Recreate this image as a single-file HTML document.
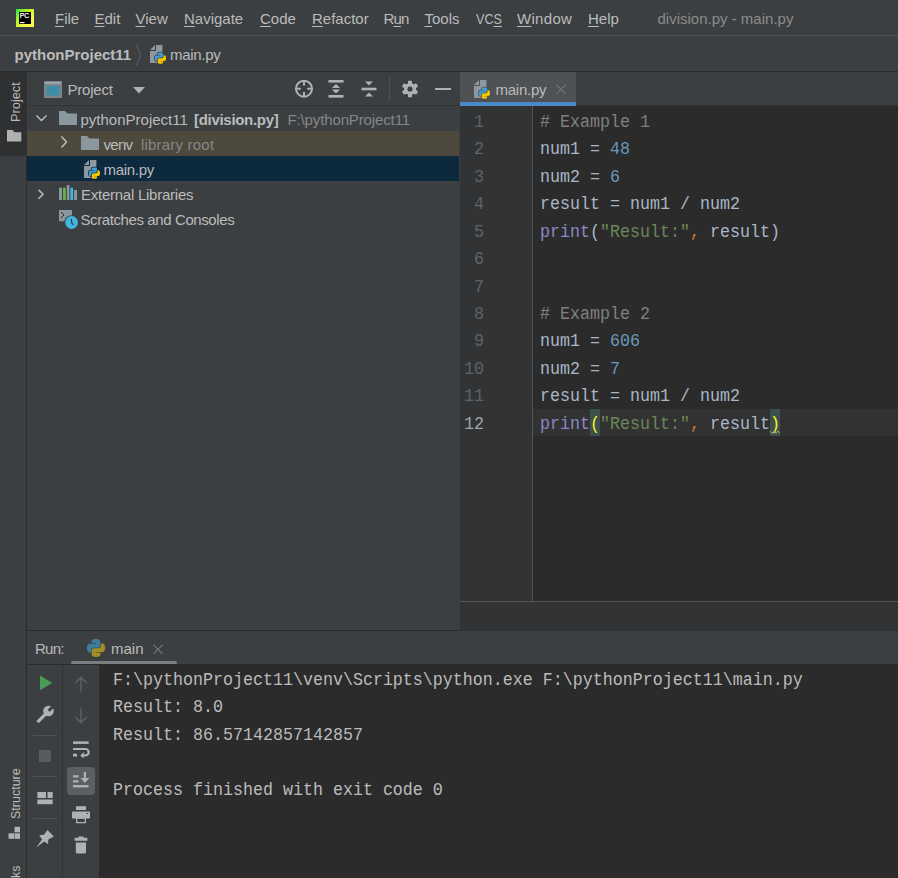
<!DOCTYPE html>
<html><head><meta charset="utf-8">
<style>
*{box-sizing:border-box}
html,body{margin:0;padding:0;width:898px;height:878px;overflow:hidden;background:#3C3F41;font-family:"Liberation Sans",sans-serif;color:#BBBBBB}
.a{position:absolute}
.t{position:absolute;white-space:pre;font-size:15px;line-height:18px}
.m{position:absolute;white-space:pre;font-family:"Liberation Mono",monospace;font-size:16.67px;line-height:27.46px;transform:scaleY(1.07);transform-origin:0 19.5px}
u{text-decoration:underline;text-decoration-thickness:1px;text-underline-offset:2px}
</style></head><body>
<!-- menu bar -->
<div class="a" style="left:0;top:0;width:898px;height:35px;background:#3C3F41"></div>
<div class="a" style="left:0;top:35px;width:898px;height:1px;background:#515151"></div>
<!-- nav bar -->
<div class="a" style="left:0;top:36px;width:898px;height:35px;background:#3C3F41"></div>
<div class="a" style="left:0;top:71px;width:898px;height:1px;background:#2B2B2B"></div>

<!-- left strip -->
<div class="a" style="left:0;top:72px;width:27px;height:806px;background:#3C3F41"></div>
<div class="a" style="left:26px;top:72px;width:1px;height:806px;background:#2B2B2B"></div>
<div class="a" style="left:0;top:72px;width:27px;height:84px;background:#2E3032"></div>

<!-- project panel -->
<div class="a" style="left:27px;top:72px;width:432px;height:558px;background:#3C3F41"></div>
<div class="a" style="left:27px;top:105px;width:432px;height:1px;background:#323232"></div>
<div class="a" style="left:27px;top:131px;width:432px;height:25px;background:#4D493D"></div>
<div class="a" style="left:27px;top:156px;width:432px;height:25px;background:#0D293E"></div>


<!-- editor -->
<div class="a" style="left:460px;top:72px;width:438px;height:30px;background:#3C3F41"></div>
<div class="a" style="left:460px;top:72px;width:116px;height:30px;background:#4E5254"></div>
<div class="a" style="left:460px;top:102px;width:116px;height:4px;background:#4A88C7"></div>
<div class="a" style="left:576px;top:105px;width:322px;height:1px;background:#323232"></div>
<div class="a" style="left:460px;top:106px;width:72px;height:495px;background:#313335"></div>
<div class="a" style="left:532px;top:106px;width:1px;height:495px;background:#555555"></div>
<div class="a" style="left:533px;top:106px;width:365px;height:495px;background:#2B2B2B"></div>
<div class="a" style="left:533px;top:409px;width:365px;height:27px;background:#323232"></div>
<div class="a" style="left:460px;top:601px;width:438px;height:1px;background:#555555"></div>
<div class="a" style="left:460px;top:602px;width:438px;height:28px;background:#313335"></div>

<!-- run panel -->
<div class="a" style="left:27px;top:630px;width:433px;height:1px;background:#2B2B2B"></div>
<div class="a" style="left:460px;top:630px;width:438px;height:1px;background:#2F3133"></div>
<div class="a" style="left:27px;top:631px;width:871px;height:34px;background:#3C3F41"></div>
<div class="a" style="left:27px;top:664px;width:72px;height:1px;background:#2B2B2B"></div>
<div class="a" style="left:71px;top:661px;width:106px;height:3px;border-radius:2px;background:#7B7E81"></div>
<div class="a" style="left:27px;top:665px;width:35px;height:213px;background:#3C3F41"></div>
<div class="a" style="left:62px;top:665px;width:1px;height:213px;background:#323232"></div>
<div class="a" style="left:63px;top:665px;width:36px;height:213px;background:#3C3F41"></div>
<div class="a" style="left:99px;top:664px;width:799px;height:214px;background:#2B2B2B"></div>


<!-- menu text -->
<div class="t" style="left:55px;top:10px"><u>F</u>ile</div>
<div class="t" style="left:94.5px;top:10px"><u>E</u>dit</div>
<div class="t" style="left:135.5px;top:10px"><u>V</u>iew</div>
<div class="t" style="left:184px;top:10px"><u>N</u>avigate</div>
<div class="t" style="left:260px;top:10px"><u>C</u>ode</div>
<div class="t" style="left:312px;top:10px"><u>R</u>efactor</div>
<div class="t" style="left:383.5px;top:10px;letter-spacing:-0.9px">R<u>u</u>n</div>
<div class="t" style="left:424.5px;top:10px"><u>T</u>ools</div>
<div class="t" style="left:476px;top:10px;transform:scaleX(0.84);transform-origin:0 0">VC<u>S</u></div>
<div class="t" style="left:517px;top:10px;letter-spacing:0.3px"><u>W</u>indow</div>
<div class="t" style="left:588px;top:10px"><u>H</u>elp</div>
<div class="t" style="left:657.5px;top:10px;color:#8C8C8C">division.py - main.py</div>
<!-- nav text -->
<div class="t" style="left:14.5px;top:46px;font-weight:bold">pythonProject11</div>
<div class="t" style="left:170px;top:46px;letter-spacing:-0.3px">main.py</div>
<!-- project header -->
<div class="t" style="left:67.5px;top:81px;letter-spacing:-0.2px">Project</div>
<!-- tree -->
<div class="t" style="left:80.5px;top:111px">pythonProject11</div>
<div class="t" style="left:194px;top:111px;font-weight:bold;letter-spacing:-0.3px">[division.py]</div>
<div class="t" style="left:287.5px;top:111px;color:#868686;letter-spacing:-0.13px">F:\pythonProject11</div>
<div class="t" style="left:103.5px;top:136px;letter-spacing:-0.7px">venv</div>
<div class="t" style="left:141px;top:136px;color:#868686;letter-spacing:0.2px">library root</div>
<div class="t" style="left:103.5px;top:161px;letter-spacing:-0.3px">main.py</div>
<div class="t" style="left:81px;top:186px;letter-spacing:-0.25px">External Libraries</div>
<div class="t" style="left:80.5px;top:211px;letter-spacing:-0.4px">Scratches and Consoles</div>


<!-- PC logo -->
<svg class="a" style="left:16px;top:9px" width="18" height="18" viewBox="0 0 18 18">
<defs><linearGradient id="pcg" x1="0" y1="0" x2="1" y2="1"><stop offset="0" stop-color="#1FE05A"/><stop offset="0.3" stop-color="#A8F020"/><stop offset="0.7" stop-color="#FCF84A"/><stop offset="1" stop-color="#FCF84A"/></linearGradient></defs>
<rect x="0" y="0" width="18" height="18" fill="url(#pcg)"/>
<rect x="3" y="3" width="12" height="12" fill="#000"/>
<text x="3.7" y="9.1" font-family="Liberation Sans" font-size="7.6" fill="#fff" stroke="#fff" stroke-width="0.25" textLength="9.3" lengthAdjust="spacingAndGlyphs">PC</text>
<rect x="4" y="13" width="4.5" height="1.2" fill="#fff"/>
</svg>
<!-- nav chevron -->
<svg class="a" style="left:134px;top:43px" width="10" height="24" viewBox="0 0 10 24"><path d="M2,1 L7,12 L2,23" fill="none" stroke="#5E6163" stroke-width="1"/></svg>
<svg class="a" style="left:149px;top:44px" width="19" height="20" viewBox="0 0 19 20">
<path d="M1,6 L6,1 L6,6 Z" fill="#8E989E"/>
<path d="M7,1 H13.4 V19 H1 V7 H7 Z" fill="#8E989E"/>
<g transform="translate(5.7,8.5) scale(0.103)" stroke="#3C3F41" stroke-width="14" paint-order="stroke">
<path d="M54.9,0C26.8,0 28.6,12.2 28.6,12.2L28.6,24.8H55.4V28.6H18C18,28.6 0,26.5 0,55C0,83.5 15.7,82.5 15.7,82.5H25.1V69.3C25.1,69.3 24.6,53.6 40.5,53.6H67C67,53.6 81.9,53.8 81.9,39.2V15C81.9,15 84.2,0 54.9,0Z" fill="#3E9FD6"/><path d="M55.7,110C83.8,110 82,97.8 82,97.8L82,85.2H55.2V81.4H92.6C92.6,81.4 110.6,83.5 110.6,55C110.6,26.5 94.9,27.5 94.9,27.5H85.5V40.7C85.5,40.7 86,56.4 70.1,56.4H43.6C43.6,56.4 28.7,56.2 28.7,70.8V95C28.7,95 26.4,110 55.7,110Z" fill="#F4C300"/>
</g></svg>
<!-- project header icon -->
<svg class="a" style="left:44px;top:81px" width="18" height="17" viewBox="0 0 18 17">
<rect x="0" y="0" width="18" height="17" fill="#7C8589"/>
<rect x="1" y="1" width="16" height="2" fill="#9BA4A8"/>
<rect x="2.5" y="5" width="13" height="9.5" fill="#3E8CA8"/>
</svg>
<svg class="a" style="left:133px;top:87px" width="12" height="7" viewBox="0 0 12 7"><path d="M0,0 H12 L6,6.5 Z" fill="#AFB1B3"/></svg>
<!-- header toolbar icons -->
<svg class="a" style="left:294px;top:79px" width="20" height="20" viewBox="0 0 20 20" fill="none" stroke="#AFB1B3" stroke-width="2">
<circle cx="10" cy="9.7" r="8"/>
<path d="M10,1.5 V6.5 M10,13 V18 M1.8,9.7 H6.8 M13.2,9.7 H18.2"/>
</svg>
<svg class="a" style="left:327px;top:79px" width="18" height="20" viewBox="0 0 18 20" fill="#AFB1B3">
<rect x="1.5" y="1" width="15" height="2.6"/><rect x="1.5" y="16" width="15" height="2.6"/>
<path d="M5,9 L9,5 L13,9 Z M5,10.6 L9,14.6 L13,10.6 Z"/>
</svg>
<svg class="a" style="left:360px;top:80px" width="18" height="18" viewBox="0 0 18 18" fill="#AFB1B3">
<rect x="1.5" y="7.7" width="15" height="2.6"/>
<path d="M5,1.5 L13,1.5 L9,5.5 Z M5,16.5 L13,16.5 L9,12.5 Z"/>
</svg>
<div class="a" style="left:389px;top:77px;width:1px;height:23px;background:#515151"></div>
<svg class="a" style="left:401px;top:80px" width="18" height="18" viewBox="0 0 18 18">
<g fill="#AFB1B3"><circle cx="9" cy="9" r="6"/>
<rect x="7" y="0.8" width="4" height="16.4" rx="0.6"/>
<rect x="7" y="0.8" width="4" height="16.4" rx="0.6" transform="rotate(60 9 9)"/>
<rect x="7" y="0.8" width="4" height="16.4" rx="0.6" transform="rotate(120 9 9)"/>
</g><circle cx="9" cy="9" r="2.6" fill="#3C3F41"/>
</svg>
<div class="a" style="left:435px;top:88px;width:16px;height:2px;background:#AFB1B3"></div>
<!-- tree icons -->
<svg class="a" style="left:35px;top:114px" width="13" height="8" viewBox="0 0 13 8"><path d="M1.5,1.5 L6.5,6.5 L11.5,1.5" fill="none" stroke="#C2C2C2" stroke-width="1.4"/></svg>
<svg class="a" style="left:59px;top:111px" width="18" height="15" viewBox="0 0 18 15"><path d="M0,0 H6 L8.5,2.5 H18 V14 H0 Z" fill="#8B979E"/></svg>
<svg class="a" style="left:60px;top:135px" width="8" height="14" viewBox="0 0 8 14"><path d="M1.5,1.5 L6.5,7 L1.5,12.5" fill="none" stroke="#C2C2C2" stroke-width="1.4"/></svg>
<svg class="a" style="left:81px;top:136px" width="18" height="15" viewBox="0 0 18 15"><path d="M0,0 H6 L8.5,2.5 H18 V14 H0 Z" fill="#8B979E"/></svg>
<svg class="a" style="left:83px;top:159px" width="19" height="20" viewBox="0 0 19 20">
<path d="M1,6 L6,1 L6,6 Z" fill="#8E989E"/>
<path d="M7,1 H13.4 V19 H1 V7 H7 Z" fill="#8E989E"/>
<g transform="translate(5.7,8.5) scale(0.103)" stroke="#0D293E" stroke-width="14" paint-order="stroke">
<path d="M54.9,0C26.8,0 28.6,12.2 28.6,12.2L28.6,24.8H55.4V28.6H18C18,28.6 0,26.5 0,55C0,83.5 15.7,82.5 15.7,82.5H25.1V69.3C25.1,69.3 24.6,53.6 40.5,53.6H67C67,53.6 81.9,53.8 81.9,39.2V15C81.9,15 84.2,0 54.9,0Z" fill="#3E9FD6"/><path d="M55.7,110C83.8,110 82,97.8 82,97.8L82,85.2H55.2V81.4H92.6C92.6,81.4 110.6,83.5 110.6,55C110.6,26.5 94.9,27.5 94.9,27.5H85.5V40.7C85.5,40.7 86,56.4 70.1,56.4H43.6C43.6,56.4 28.7,56.2 28.7,70.8V95C28.7,95 26.4,110 55.7,110Z" fill="#F4C300"/>
</g></svg>
<svg class="a" style="left:37px;top:189px" width="8" height="11" viewBox="0 0 8 11"><path d="M1.5,0.8 L6,5.3 L1.5,9.8" fill="none" stroke="#C2C2C2" stroke-width="1.4"/></svg>
<svg class="a" style="left:59px;top:185px" width="18" height="15" viewBox="0 0 18 15">
<rect x="0" y="2.7" width="3" height="12.3" fill="#8B979E"/>
<rect x="4" y="2.7" width="2.8" height="12.3" fill="#62B543"/>
<rect x="7.8" y="0" width="2.6" height="15" fill="#8B979E"/>
<rect x="11.4" y="2.7" width="2.7" height="12.3" fill="#40B6E0"/>
<rect x="15.1" y="5" width="2.9" height="10" fill="#8B979E"/>
</svg>
<svg class="a" style="left:58px;top:209px" width="22" height="21" viewBox="0 0 22 21">
<rect x="1" y="1" width="13" height="11.3" fill="#8B979E"/>
<path d="M3,3 L6,6 L3,9" fill="none" stroke="#2B2B2B" stroke-width="1"/>
<circle cx="13.6" cy="13.5" r="7.3" fill="#3C3F41"/>
<circle cx="13.6" cy="13.5" r="6.4" fill="#40B6E0"/>
<path d="M13.4,10 L13.8,14 L15.4,16" fill="none" stroke="#2B2B2B" stroke-width="1.1"/>
</svg>
<!-- editor tab -->
<div class="t" style="left:495.5px;top:81px;letter-spacing:-0.25px">main.py</div>
<svg class="a" style="left:555px;top:83px" width="12" height="12" viewBox="0 0 12 12"><path d="M1.5,1.8 L10.5,10.8 M10.5,1.8 L1.5,10.8" stroke="#727476" stroke-width="1.2"/></svg>
<svg class="a" style="left:473px;top:79px" width="19" height="20" viewBox="0 0 19 20">
<path d="M1,6 L6,1 L6,6 Z" fill="#8E989E"/>
<path d="M7,1 H13.4 V19 H1 V7 H7 Z" fill="#8E989E"/>
<g transform="translate(5.7,8.5) scale(0.103)" stroke="#4E5254" stroke-width="14" paint-order="stroke">
<path d="M54.9,0C26.8,0 28.6,12.2 28.6,12.2L28.6,24.8H55.4V28.6H18C18,28.6 0,26.5 0,55C0,83.5 15.7,82.5 15.7,82.5H25.1V69.3C25.1,69.3 24.6,53.6 40.5,53.6H67C67,53.6 81.9,53.8 81.9,39.2V15C81.9,15 84.2,0 54.9,0Z" fill="#3E9FD6"/><path d="M55.7,110C83.8,110 82,97.8 82,97.8L82,85.2H55.2V81.4H92.6C92.6,81.4 110.6,83.5 110.6,55C110.6,26.5 94.9,27.5 94.9,27.5H85.5V40.7C85.5,40.7 86,56.4 70.1,56.4H43.6C43.6,56.4 28.7,56.2 28.7,70.8V95C28.7,95 26.4,110 55.7,110Z" fill="#F4C300"/>
</g></svg>
<div class="a" style="left:590px;top:409px;width:10px;height:27px;background:#3B514D"></div>
<div class="a" style="left:770px;top:409px;width:10px;height:27px;background:#3B514D"></div>
<div class="m" style="left:444px;width:40px;text-align:right;top:108.80px;color:#606366">1</div>
<div class="m" style="left:540px;top:108.80px"><span style="color:#808080"># Example 1</span></div>
<div class="m" style="left:444px;width:40px;text-align:right;top:136.26px;color:#606366">2</div>
<div class="m" style="left:540px;top:136.26px"><span style="color:#A9B7C6">num1 = </span><span style="color:#6897BB">48</span></div>
<div class="m" style="left:444px;width:40px;text-align:right;top:163.72px;color:#606366">3</div>
<div class="m" style="left:540px;top:163.72px"><span style="color:#A9B7C6">num2 = </span><span style="color:#6897BB">6</span></div>
<div class="m" style="left:444px;width:40px;text-align:right;top:191.18px;color:#606366">4</div>
<div class="m" style="left:540px;top:191.18px"><span style="color:#A9B7C6">result = num1 / num2</span></div>
<div class="m" style="left:444px;width:40px;text-align:right;top:218.64px;color:#606366">5</div>
<div class="m" style="left:540px;top:218.64px"><span style="color:#8888C6">print</span><span style="color:#A9B7C6">(</span><span style="color:#6A8759">"Result:"</span><span style="color:#CC7832">, </span><span style="color:#A9B7C6">result</span><span style="color:#A9B7C6">)</span></div>
<div class="m" style="left:444px;width:40px;text-align:right;top:246.10px;color:#606366">6</div>
<div class="m" style="left:444px;width:40px;text-align:right;top:273.56px;color:#606366">7</div>
<div class="m" style="left:444px;width:40px;text-align:right;top:301.02px;color:#606366">8</div>
<div class="m" style="left:540px;top:301.02px"><span style="color:#808080"># Example 2</span></div>
<div class="m" style="left:444px;width:40px;text-align:right;top:328.48px;color:#606366">9</div>
<div class="m" style="left:540px;top:328.48px"><span style="color:#A9B7C6">num1 = </span><span style="color:#6897BB">606</span></div>
<div class="m" style="left:444px;width:40px;text-align:right;top:355.94px;color:#606366">10</div>
<div class="m" style="left:540px;top:355.94px"><span style="color:#A9B7C6">num2 = </span><span style="color:#6897BB">7</span></div>
<div class="m" style="left:444px;width:40px;text-align:right;top:383.40px;color:#606366">11</div>
<div class="m" style="left:540px;top:383.40px"><span style="color:#A9B7C6">result = num1 / num2</span></div>
<div class="m" style="left:444px;width:40px;text-align:right;top:410.86px;color:#A4A3A3">12</div>
<div class="m" style="left:540px;top:410.86px"><span style="color:#8888C6">print</span><span style="color:#FFEF28">(</span><span style="color:#6A8759">"Result:"</span><span style="color:#CC7832">, </span><span style="color:#A9B7C6">result</span><span style="color:#FFEF28">)</span></div>
<svg class="a" style="left:770px;top:430px" width="10" height="5" viewBox="0 0 10 5"><path d="M0,1 L2,3.5 L4,1 L6,3.5 L8,1 L10,3.5" fill="none" stroke="#A9A57D" stroke-width="1"/></svg>

<!-- run header -->
<div class="t" style="left:35px;top:640px;letter-spacing:-0.75px">Run:</div>
<svg class="a" style="left:87px;top:639px" width="18" height="18" viewBox="0 0 18 18">
<g transform="scale(0.1628)"><path d="M54.9,0C26.8,0 28.6,12.2 28.6,12.2L28.6,24.8H55.4V28.6H18C18,28.6 0,26.5 0,55C0,83.5 15.7,82.5 15.7,82.5H25.1V69.3C25.1,69.3 24.6,53.6 40.5,53.6H67C67,53.6 81.9,53.8 81.9,39.2V15C81.9,15 84.2,0 54.9,0Z" fill="#3D7C9C"/><path d="M55.7,110C83.8,110 82,97.8 82,97.8L82,85.2H55.2V81.4H92.6C92.6,81.4 110.6,83.5 110.6,55C110.6,26.5 94.9,27.5 94.9,27.5H85.5V40.7C85.5,40.7 86,56.4 70.1,56.4H43.6C43.6,56.4 28.7,56.2 28.7,70.8V95C28.7,95 26.4,110 55.7,110Z" fill="#A38F27"/></g></svg>
<div class="t" style="left:111px;top:640px">main</div>
<svg class="a" style="left:152px;top:643px" width="12" height="12" viewBox="0 0 12 12"><path d="M1.5,1.8 L10.5,10.8 M10.5,1.8 L1.5,10.8" stroke="#727476" stroke-width="1.2"/></svg>
<!-- run toolbar col1 -->
<svg class="a" style="left:40px;top:675px" width="13" height="16" viewBox="0 0 13 16"><path d="M0,0.6 L12.3,8 L0,15.3 Z" fill="#499C54"/></svg>
<svg class="a" style="left:36px;top:705px" width="19" height="19" viewBox="0 0 19 19"><path d="M1.5,17.2 L10,8.7" stroke="#AFB1B3" stroke-width="3.3"/><circle cx="12.5" cy="6" r="5.3" fill="#AFB1B3"/><path d="M13.77,6.85 L11.65,4.73 L16.39,-0.01 L18.51,2.11 Z" fill="#3C3F41"/></svg>
<div class="a" style="left:33px;top:735px;width:24px;height:1px;background:#515151"></div>
<div class="a" style="left:39px;top:750px;width:12px;height:12px;background:#595B5D"></div>
<div class="a" style="left:33px;top:776px;width:24px;height:1px;background:#515151"></div>
<svg class="a" style="left:37px;top:792px" width="16" height="13" viewBox="0 0 16 13" fill="#AFB1B3"><rect x="0.4" y="0" width="8.6" height="6"/><rect x="10.5" y="0" width="5.2" height="6"/><rect x="0.4" y="7.5" width="15.3" height="4.7"/></svg>
<div class="a" style="left:33px;top:818px;width:24px;height:1px;background:#515151"></div>
<svg class="a" style="left:35px;top:829px" width="20" height="20" viewBox="0 0 20 20" fill="#AFB1B3"><path d="M1.3,18.6 L7,10.4 L4.2,6.3 L8.9,5.7 L12.5,1 L18.8,7.5 L13.3,10.5 L13,15 L9.2,12.6 Z"/></svg>
<!-- run toolbar col2 -->
<svg class="a" style="left:74px;top:676px" width="14" height="16" viewBox="0 0 14 16" fill="none" stroke="#5E6060" stroke-width="1.5"><path d="M7,15.5 V1.5 M1.2,7.2 L7,1.4 L12.8,7.2"/></svg>
<svg class="a" style="left:74px;top:708px" width="14" height="16" viewBox="0 0 14 16" fill="none" stroke="#5E6060" stroke-width="1.5"><path d="M7,0.5 V14.5 M1.2,8.8 L7,14.6 L12.8,8.8"/></svg>
<svg class="a" style="left:72px;top:740px" width="19" height="18" viewBox="0 0 19 18" fill="#AFB1B3">
<rect x="1" y="1.4" width="15.7" height="2.5"/>
<path d="M1,7.9 H13.5 A4.3,4.3 0 0 1 13.5,16.5 H11.5 V14.3 H13.5 A2.1,2.1 0 0 0 13.5,10.1 H1 Z"/>
<rect x="1" y="13.7" width="4" height="2.8"/>
<path d="M8.3,15.4 L11.8,12 L11.8,18.8 Z"/>
</svg>
<div class="a" style="left:67px;top:767px;width:28px;height:28px;border-radius:4px;background:#5B5F62"></div>
<svg class="a" style="left:72px;top:771px" width="18" height="17" viewBox="0 0 18 17" fill="#AFB1B3">
<rect x="1" y="4.2" width="5.5" height="2.3"/><rect x="1" y="9.2" width="5.5" height="2.3"/><rect x="1" y="14" width="15.5" height="2.4"/>
<rect x="11.8" y="1" width="2.2" height="7"/><path d="M8.5,7 H17.3 L12.9,12 Z"/>
</svg>
<svg class="a" style="left:71px;top:806px" width="20" height="18" viewBox="0 0 20 18" fill="#AFB1B3">
<rect x="5" y="0.2" width="10" height="3.8"/>
<rect x="1" y="5.5" width="18" height="7" rx="0.8"/>
<path d="M5,11 H15 V17.2 H5 Z M6.3,12.8 V15.9 H13.7 V12.8 Z" fill-rule="evenodd"/>
<rect x="15.5" y="7" width="1.5" height="1" fill="#3C3F41"/>
</svg>
<svg class="a" style="left:74px;top:836px" width="14" height="18" viewBox="0 0 14 18" fill="#AFB1B3">
<rect x="0.6" y="1.8" width="12.8" height="3" rx="0.6"/><rect x="4.5" y="0.5" width="5" height="2"/>
<path d="M1.8,6.4 H12 V16 Q12,17.6 10.4,17.6 H3.4 Q1.8,17.6 1.8,16 Z"/>
</svg>
<!-- console text -->
<div class="m" style="left:113px;top:667px;color:#BBBBBB">F:\pythonProject11\venv\Scripts\python.exe F:\pythonProject11\main.py</div>
<div class="m" style="left:113px;top:694.46px;color:#BBBBBB">Result: 8.0</div>
<div class="m" style="left:113px;top:721.92px;color:#BBBBBB">Result: 86.57142857142857</div>
<div class="m" style="left:113px;top:776.84px;color:#BBBBBB">Process finished with exit code 0</div>
<!-- left strip -->
<div class="t" style="left:7px;top:122px;font-size:12.8px;transform:rotate(-90deg);transform-origin:left top">Project</div>
<svg class="a" style="left:7px;top:130px" width="15" height="12" viewBox="0 0 15 12"><path d="M0,0 H5.5 L7.5,2.2 H14.3 V11.5 H0 Z" fill="#AFB1B3"/></svg>
<div class="t" style="left:7px;top:819px;font-size:12.5px;transform:rotate(-90deg);transform-origin:left top">Structure</div>
<svg class="a" style="left:8px;top:826px" width="13" height="14" viewBox="0 0 13 14" fill="#AFB1B3"><rect x="6.5" y="0.8" width="5.5" height="5.5"/><rect x="0.5" y="7.3" width="5.5" height="5.5"/><rect x="6.5" y="7.3" width="5.5" height="5.5"/></svg>
<div class="t" style="left:7px;top:928px;font-size:12.5px;transform:rotate(-90deg);transform-origin:left top">Bookmarks</div>
</body></html>
